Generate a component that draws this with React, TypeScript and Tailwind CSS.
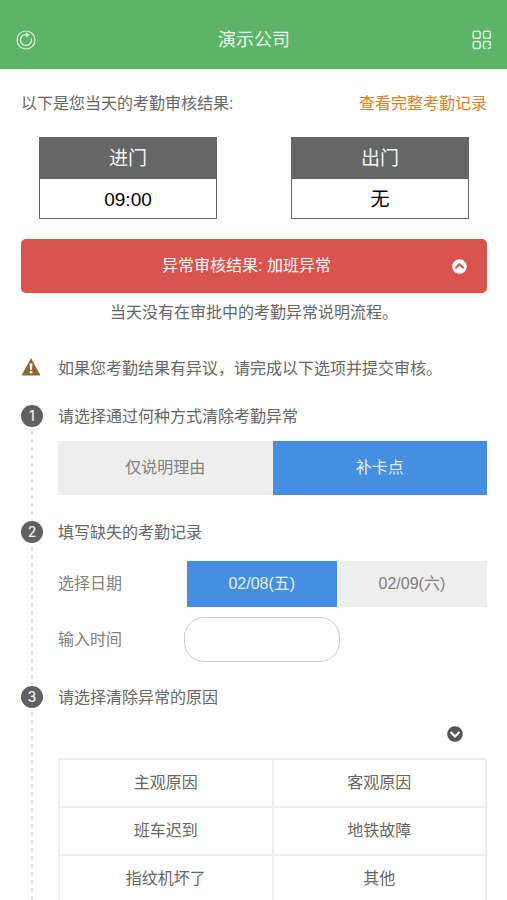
import React, { useState } from "react";
import { FaChevronCircleDown, FaChevronCircleUp } from "react-icons/fa";

const methods = ["仅说明理由", "补卡点"];
const dates = ["02/08(五)", "02/09(六)"];
const reasons = [
  ["班车迟到", "地铁故障"],
  ["指纹机坏了", "其他"],
];

function RefreshIcon() {
  return (
    <svg width="20" height="20" viewBox="0 0 20 20" fill="none" stroke="currentColor">
      <circle cx="10" cy="10" r="9" strokeWidth="1.2" />
      <path d="M10.4 4.5A5.5 5.5 0 1 0 15.3 8.6" strokeWidth="1.4" />
      <path d="M9.8 2.3 13.8 4.7 10.2 7.5Z" fill="currentColor" stroke="none" />
    </svg>
  );
}

function QrIcon() {
  return (
    <svg width="20" height="20" viewBox="0 0 20 20" fill="none" stroke="currentColor" strokeWidth="1.5">
      <rect x="1.2" y="1.2" width="7" height="7" rx="1.8" />
      <rect x="11.4" y="1.2" width="7" height="7" rx="1.8" />
      <rect x="1.2" y="11.4" width="7" height="7" rx="1.8" />
      <path d="M13.6 18.4H13a1.6 1.6 0 0 1-1.6-1.6V13a1.6 1.6 0 0 1 1.6-1.6h3.8a1.6 1.6 0 0 1 1.6 1.6v1.8h-1.8M15.6 18.4h.8a2 2 0 0 0 2-2" />
    </svg>
  );
}

function WarningIcon() {
  return (
    <svg width="20" height="20" viewBox="0 0 20 20" className="shrink-0">
      <path d="M10 1 19 17.5a.7.7 0 0 1-.6 1H1.6a.7.7 0 0 1-.6-1Z" fill="#8a6a35" />
      <path d="M8.5 6.5h3l-.6 6.3H9.1Z" fill="#fff" />
      <rect x="8.7" y="14" width="2.6" height="2.4" fill="#fff" />
    </svg>
  );
}

function GateCard({ title, value }: { title: string; value: string }) {
  return (
    <div className="w-[178px] border border-[#666] text-center text-[19px]">
      <div className="bg-[#666] text-[#f5f5f5] h-[41px] leading-[41px]">{title}</div>
      <div className="text-black h-[39px] leading-[41px]">{value}</div>
    </div>
  );
}

type StepProps = { no: number; title: string; className?: string; children: React.ReactNode };

function Step({ no, title, className, children }: StepProps) {
  return (
    <li className="flex gap-[15px]">
      {/* 序号和虚线 */}
      <div className="flex flex-col items-center w-[22px] shrink-0">
        <span className="w-[22px] h-[22px] rounded-full bg-[#606060] text-[#eee] font-['Inter',sans-serif] font-medium text-sm leading-[22px] text-center">
          {no}
        </span>
        <span className="w-[2px] flex-1 bg-[repeating-linear-gradient(to_bottom,transparent_0px,transparent_4px,#e2e2e2_4px,#e2e2e2_8px)]" />
      </div>
      <div className={`flex-1 ${className ?? ""}`}>
        <h2 className="leading-6">{title}</h2>
        {children}
      </div>
    </li>
  );
}

export default function App() {
  const [open, setOpen] = useState(true);
  const [method, setMethod] = useState(1);
  const [date, setDate] = useState(0);
  const [showReasons, setShowReasons] = useState(true);

  return (
    <div className="min-h-screen bg-white text-base text-[#666] font-['Liberation_Sans','Noto_Sans_CJK_SC',sans-serif]">
      <header className="flex items-center justify-between bg-[#5cb566] text-[#d9f3dc] h-[69px] pl-4 pr-[15px] pt-[10px]">
        <button aria-label="刷新">
          <RefreshIcon />
        </button>
        <h1 className="text-lg text-[#f0fbf1]">演示公司</h1>
        <button aria-label="二维码">
          <QrIcon />
        </button>
      </header>

      <main className="pl-[21px] pr-5">
        <div className="flex justify-between leading-6 pt-[23px]">
          <p>以下是您当天的考勤审核结果:</p>
          <a href="#" className="text-[#d9822b]">
            查看完整考勤记录
          </a>
        </div>

        <div className="flex justify-between px-[18px] mt-[21px]">
          <GateCard title="进门" value="09:00" />
          <GateCard title="出门" value="无" />
        </div>

        {/* 异常审核结果 */}
        <button
          onClick={() => setOpen(!open)}
          className="flex items-center w-full h-[54px] mt-5 px-5 rounded-[5px] bg-[#d9534f] text-white"
        >
          <span className="flex-1">异常审核结果: 加班异常</span>
          {open ? <FaChevronCircleUp size={15} /> : <FaChevronCircleDown size={15} />}
        </button>
        {open && <p className="text-center leading-6 mt-2">当天没有在审批中的考勤异常说明流程。</p>}

        <div className="flex items-start gap-[17px] leading-6 mt-8">
          <WarningIcon />
          <p>如果您考勤结果有异议，请完成以下选项并提交审核。</p>
        </div>

        <ol className="mt-6">
          <Step no={1} title="请选择通过何种方式清除考勤异常" className="pb-[26px]">
            <div className="grid grid-cols-2 mt-3">
              {methods.map((name, i) => (
                <button
                  key={name}
                  onClick={() => setMethod(i)}
                  className={`h-[54px] ${i === method ? "bg-[#468edf] text-[#e3f0ff]" : "bg-[#eee] text-[#808080]"}`}
                >
                  {name}
                </button>
              ))}
            </div>
          </Step>

          <Step no={2} title="填写缺失的考勤记录" className="pb-6">
            <div className="flex items-center justify-between mt-4 text-[#808080]">
              <span>选择日期</span>
              <div className="grid grid-cols-2 w-[70%]">
                {dates.map((name, i) => (
                  <button
                    key={name}
                    onClick={() => setDate(i)}
                    className={`h-[46px] ${i === date ? "bg-[#468edf] text-[#e3f0ff]" : "bg-[#eee] text-[#808080]"}`}
                  >
                    {name}
                  </button>
                ))}
              </div>
            </div>
            <div className="flex items-center mt-[10px] text-[#808080]">
              <label htmlFor="time" className="w-[126px]">
                输入时间
              </label>
              <input id="time" type="text" className="w-[156px] h-[45px] px-4 rounded-[20px] border border-[#ccc]" />
            </div>
          </Step>

          <Step no={3} title="请选择清除异常的原因">
            <div className="flex justify-end mt-4 pr-6">
              <button aria-label="展开原因" onClick={() => setShowReasons(!showReasons)} className="text-[#555]">
                <FaChevronCircleDown size={16} />
              </button>
            </div>
            {showReasons && (
              <table className="w-full mt-4 table-fixed border-collapse text-center">
                <thead>
                  <tr>
                    <th className="h-12 font-normal border-2 border-[#eee]">主观原因</th>
                    <th className="h-12 font-normal border-2 border-[#eee]">客观原因</th>
                  </tr>
                </thead>
                <tbody>
                  {reasons.map((row) => (
                    <tr key={row[0]}>
                      {row.map((cell) => (
                        <td key={cell} className="h-12 border-2 border-[#eee]">
                          {cell}
                        </td>
                      ))}
                    </tr>
                  ))}
                </tbody>
              </table>
            )}
          </Step>
        </ol>
      </main>
    </div>
  );
}
